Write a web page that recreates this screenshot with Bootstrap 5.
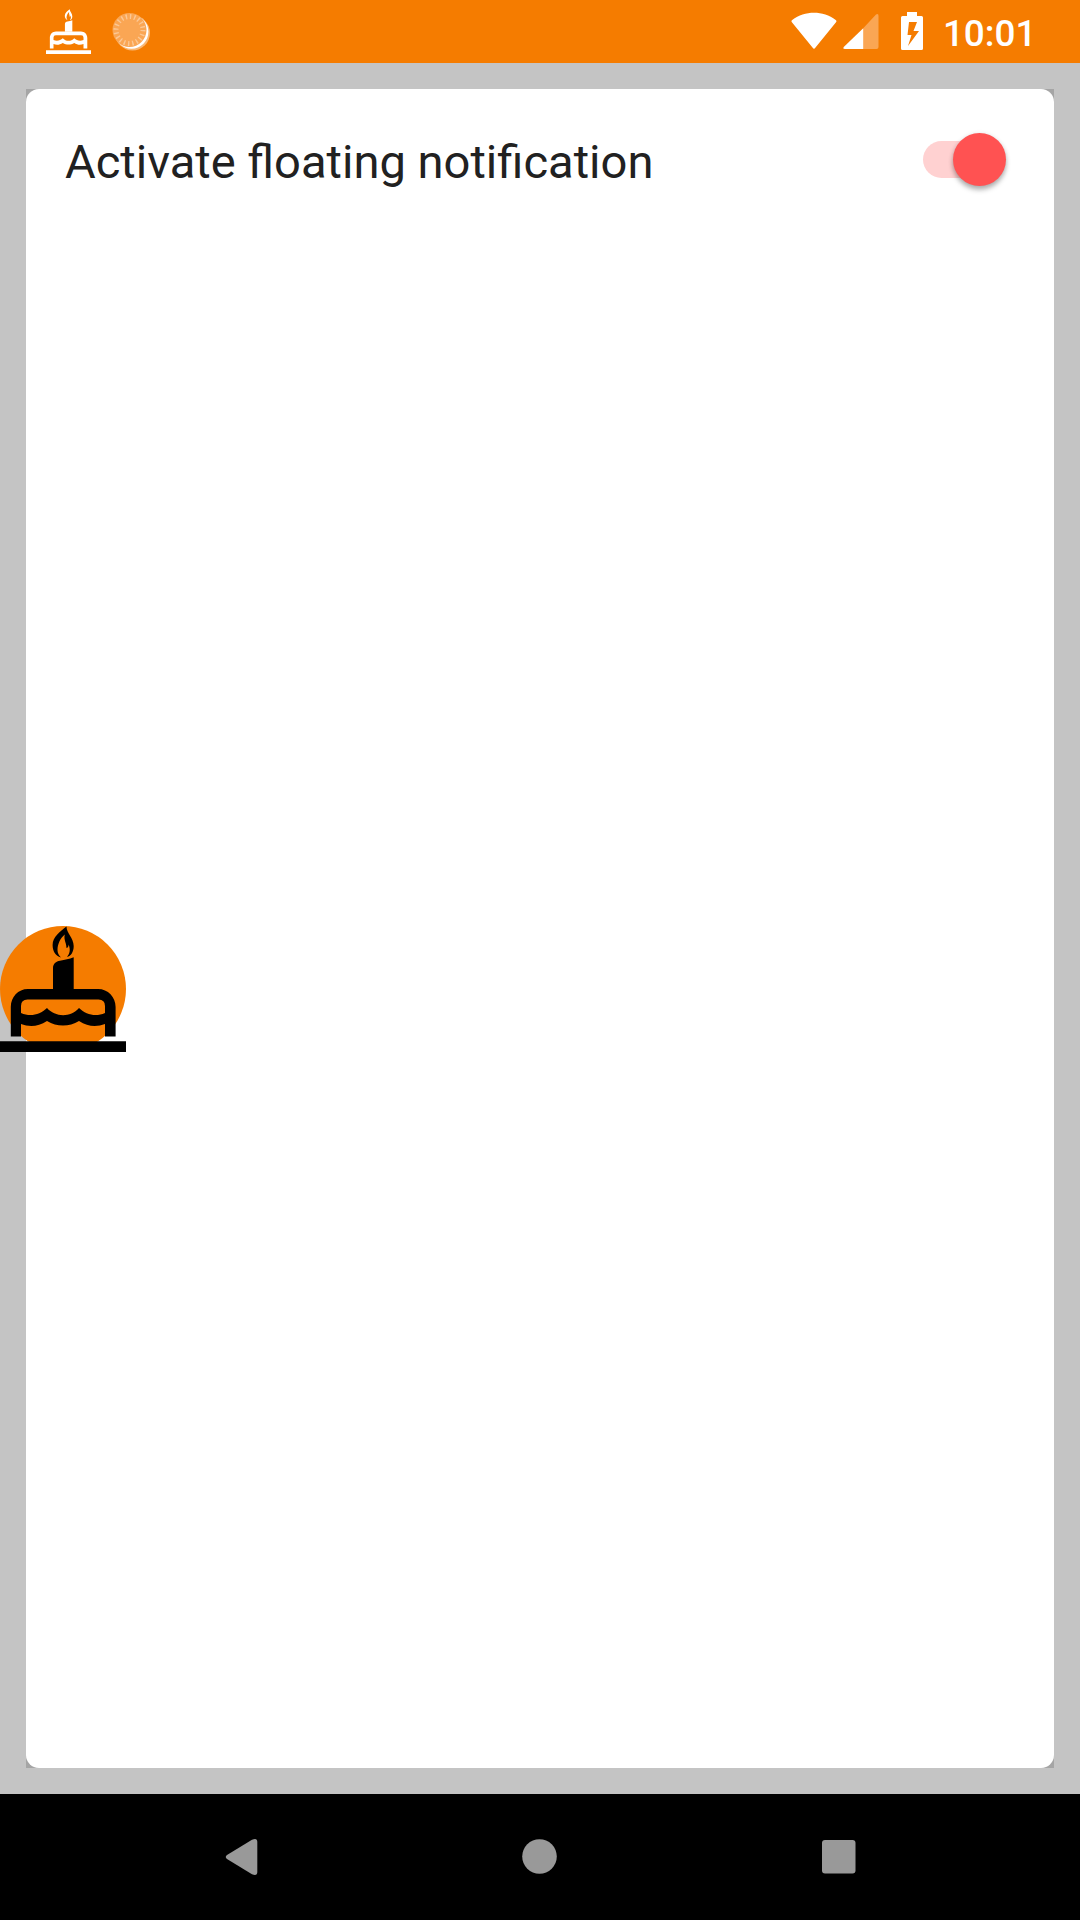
<!DOCTYPE html>
<html lang="en">
<head>
<meta charset="utf-8">
<meta name="viewport" content="width=device-width, initial-scale=1">
<title>Floating notification</title>
<link rel="stylesheet" href="https://cdn.jsdelivr.net/npm/bootstrap@5.3.0/dist/css/bootstrap.min.css">
<style>
  body { font-family: Roboto, "Liberation Sans", sans-serif; background: #c4c4c4; }
  svg { display: block; flex: none; }
  .screen { width: 1080px; height: 1920px; }
  .status-bar { height: 63px; background: #f57c00; padding: 0 43.5px 0 46px; color: #fff; }
  .cake-icon, .sync-icon, .wifi-icon, .signal-icon, .battery-icon { margin-bottom: 1px; }
  .sync-icon { margin-left: 19px; }
  .signal-icon { margin-left: 6px; }
  .battery-icon { margin-left: 22px; }
  .clock { font-size: 36.9px; font-weight: 500; line-height: 43px; margin-left: 20px; padding-top: 3px; }
  .page-area { padding: 26px; }
  .card-back { background: #a5a5a5; }
  .panel { --bs-card-border-radius: 13px; --bs-card-border-width: 0; --bs-card-bg: #fff; }
  .setting-row { padding: 40px 40px 0 39px; height: 110px; }
  .setting-label { font-size: 47.1px; line-height: 66px; color: #212121; }
  .toggle { width: 92px; height: 53px; margin: 4px 7.5px 0 0; }
  .toggle-track { width: 76px; height: 37px; border-radius: 19px; background: #ffd1d1; margin-left: 8px; }
  .toggle-thumb { width: 53px; height: 53px; right: 1px; top: 0; background: #ff5252; box-shadow: 0 4px 5px rgba(0,0,0,.26), 0 1px 5px rgba(0,0,0,.13); }
  .nav-bar { height: 126px; background: #000; padding: 0 224.5px; }
  .bubble { left: 0; top: 926px; width: 126px; height: 126px; background: #f57c00; }
</style>
<script src="https://cdn.jsdelivr.net/npm/bootstrap@5.3.0/dist/js/bootstrap.bundle.min.js"></script>
</head>
<body>
<svg width="0" height="0" class="position-absolute" aria-hidden="true">
  <symbol id="cake" viewBox="0 0 126 126">
    <path d="M66.500 0.500C66.500 7 73.700 12 73.700 20C73.700 26 71 30 67 31C70 27 70.500 24 68.700 18.500C68.500 21 67.500 22 66.300 21.800C67 18 63.300 14 64.800 8.500C60.500 12 57.500 18 57.500 24C57.500 27.500 59 29.500 61 31.500C55.500 30 52.600 25 52.600 19C52.600 11 60.500 5 66.500 0.500Z"/>
    <path d="M53 64V42C53 38 56 35.500 60 34.800C65 34 69 33 73.700 31.300V64Z"/>
    <path fill-rule="evenodd" d="M10.800 110.500V81C10.800 71 18 63 28 63H98C108 63 115.600 71 115.600 81V110.500H105V98C97 101 88 101 79 95C69 101 57 101 47 95C38 101 29 101 21 98V110.500ZM21 87C30 91 40 89 47 82C55 91 70 92 79 82C86 89 96 91 105 87V80Q105 73.500 98.500 73.500H27.500Q21 73.500 21 80Z"/>
    <path d="M0 115.300H126V126H0Z"/>
  </symbol>
</svg>

<div class="screen position-relative d-flex flex-column overflow-hidden">
  <header class="status-bar d-flex align-items-center">
    <svg class="cake-icon" width="45" height="45" fill="#fff"><use href="#cake"/></svg>
    <svg class="sync-icon" width="42" height="42" viewBox="110 9.500 42 42">
      <circle cx="132.500" cy="32.500" r="17.500" fill="#fff" fill-opacity=".45"/>
      <circle cx="131.500" cy="31.300" r="16.900" fill="#fff"/>
      <circle cx="129.500" cy="29.500" r="17" fill="#faa654"/>
      <circle cx="129.500" cy="29.500" r="13.500" fill="none" stroke="#fcc894" stroke-width="5" stroke-dasharray="1.400 2.841"/>
    </svg>
    <div class="ms-auto d-flex align-items-center">
      <svg class="wifi-icon" width="46" height="38" viewBox="0 0 46 38" fill="#fff"><path d="M.9 10.200Q-.1 9 1.200 8C14-1.700 32-1.700 44.700 8Q46 9 45 10.200L24.300 35.800Q23 37.500 21.700 35.800Z"/></svg>
      <svg class="signal-icon" width="36" height="38" viewBox="0 0 36 38"><path fill="#faa654" d="M20 16.500L33 2.500Q35.500.8 35.500 4V35Q35.500 37 33.500 37H20Z"/><path fill="#fff" d="M20.200 16.300V37H2Q-.7 37 1 34.800Z"/></svg>
      <svg class="battery-icon" width="22" height="38" viewBox="0 0 22 38"><path fill="#fff" fill-rule="evenodd" d="M6 0H16V4H20.500Q22 4 22 5.500V36.500Q22 38 20.500 38H1.500Q0 38 0 36.500V5.500Q0 4 1.500 4H6ZM8 10L6.500 23H10.500L7 34L18 19H12.500L16 10Z"/></svg>
      <span class="clock">10:01</span>
    </div>
  </header>

  <main class="page-area flex-grow-1 d-flex">
    <div class="card-back flex-grow-1 d-flex">
      <section class="card panel flex-grow-1">
        <div class="setting-row d-flex align-items-start justify-content-between">
          <label class="setting-label" for="floating">Activate floating notification</label>
          <div id="floating" class="toggle position-relative d-flex align-items-center" role="switch" aria-checked="true">
            <div class="toggle-track"></div>
            <div class="toggle-thumb position-absolute rounded-circle"></div>
          </div>
        </div>
      </section>
    </div>
  </main>

  <nav class="nav-bar d-flex align-items-center justify-content-between">
    <svg width="34" height="38" viewBox="0 0 34 38" fill="#999"><path d="M2 17L27 1.800Q32.300-.5 32.300 4V34Q32.300 38.500 27 36.300L2 21Q-.5 19 2 17Z"/></svg>
    <svg width="36" height="36" viewBox="0 0 36 36" fill="#999"><circle cx="17.500" cy="17.500" r="17.300"/></svg>
    <svg width="34" height="34" viewBox="0 0 34 34" fill="#999"><rect width="33.500" height="33.500" rx="3"/></svg>
  </nav>

  <div class="bubble position-absolute rounded-circle">
    <svg width="126" height="126" fill="#000"><use href="#cake"/></svg>
  </div>
</div>
</body>
</html>
